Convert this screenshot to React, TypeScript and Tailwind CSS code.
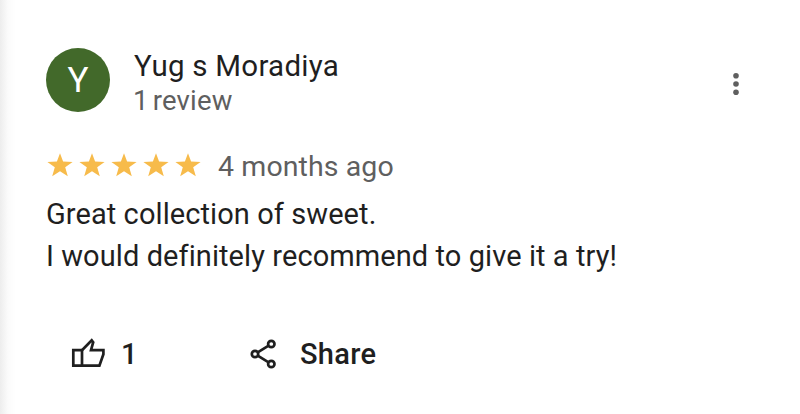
import React from "react";

function Star() {
  return (
    <svg viewBox="0 0 26 24" className="h-6 w-[26px]" fill="#f7bb4b">
      <path d="M13 0.2 L16.1 8.5 L25.6 8.9 L18.2 14.3 L20.8 23.2 L13 18.2 L5.2 23.2 L7.8 14.3 L0.4 8.9 L9.9 8.5 Z" />
    </svg>
  );
}

function ThumbIcon() {
  return (
    <svg viewBox="0 0 34 32" className="h-8 w-[34px]" fill="none" stroke="#1f1f1f" strokeWidth="2.7">
      <path d="M2.3 12.2H11V27.7H2.3Z" />
      <path d="M11 12.2L20.7 2.3L22.2 4.2L20 12.2H32.4V16.2L28.4 27.7H11" />
    </svg>
  );
}

function ShareIcon() {
  return (
    <svg viewBox="0 0 28 32" className="h-8 w-7" fill="none" stroke="#1f1f1f" strokeWidth="2.7">
      <circle cx="21.3" cy="6" r="3.2" />
      <circle cx="5" cy="16" r="3.2" />
      <circle cx="21.3" cy="26" r="3.2" />
      <path d="M7.7 14.3L18.6 7.7M7.7 17.7L18.6 24.3" />
    </svg>
  );
}

function MoreIcon() {
  return (
    <svg viewBox="0 0 16 24" className="h-6 w-4" fill="#5f5f5f">
      <circle cx="8" cy="3.7" r="2.8" />
      <circle cx="8" cy="12" r="2.8" />
      <circle cx="8" cy="20.2" r="2.8" />
    </svg>
  );
}

export default function App() {
  return (
    <div className="flex h-[414px] w-[800px] bg-white font-['Roboto','Liberation_Sans',sans-serif] text-[#1f1f1f]">
      <div className="w-4 shrink-0 bg-linear-to-r from-[#ededed] via-[#fbfbfb] to-white" />
      <article className="flex w-[784px] flex-col pl-[30px] pt-12 whitespace-nowrap">
        <header className="flex h-16">
          <div className="flex size-16 items-center justify-center rounded-full bg-[#42692a] text-[35px] leading-none text-white">
            Y
          </div>
          <div className="ml-6 w-[594px] pt-px">
            <div className="h-[34px] text-[29.5px] leading-[35px] tracking-[0.25px]">Yug s Moradiya</div>
            <div className="-ml-px h-[35px] text-[27.5px] leading-[35px] tracking-[0.2px] text-[#5f5f5f] [word-spacing:-3px]">
              1 review
            </div>
          </div>
          <button aria-label="More" className="mt-6 h-6 w-4">
            <MoreIcon />
          </button>
        </header>
        <div className="mt-[34px] flex h-10 items-center text-[28px] text-[#5f5f5f]">
          <div className="-mt-[3px] ml-px flex gap-[6px]">
            <Star />
            <Star />
            <Star />
            <Star />
            <Star />
          </div>
          <span className="ml-[17px] pt-[2px] text-[28.5px] tracking-[0.1px]">4 months ago</span>
        </div>
        <div className="mt-[7px] text-[29px] leading-[42px]">
          <p className="tracking-[0.08px]">Great collection of sweet.</p>
          <p className="tracking-[0.08px]">I would definitely recommend to give it a try!</p>
        </div>
        <footer className="mt-[57px] flex h-10 items-center text-[29px] font-medium">
          <button className="ml-[25px] flex items-center">
            <ThumbIcon />
            <span className="ml-4 w-4 pt-px">1</span>
          </button>
          <button className="ml-[113px] flex items-center">
            <ShareIcon />
            <span className="ml-[22px] pt-px tracking-[0.3px]">Share</span>
          </button>
        </footer>
      </article>
    </div>
  );
}
